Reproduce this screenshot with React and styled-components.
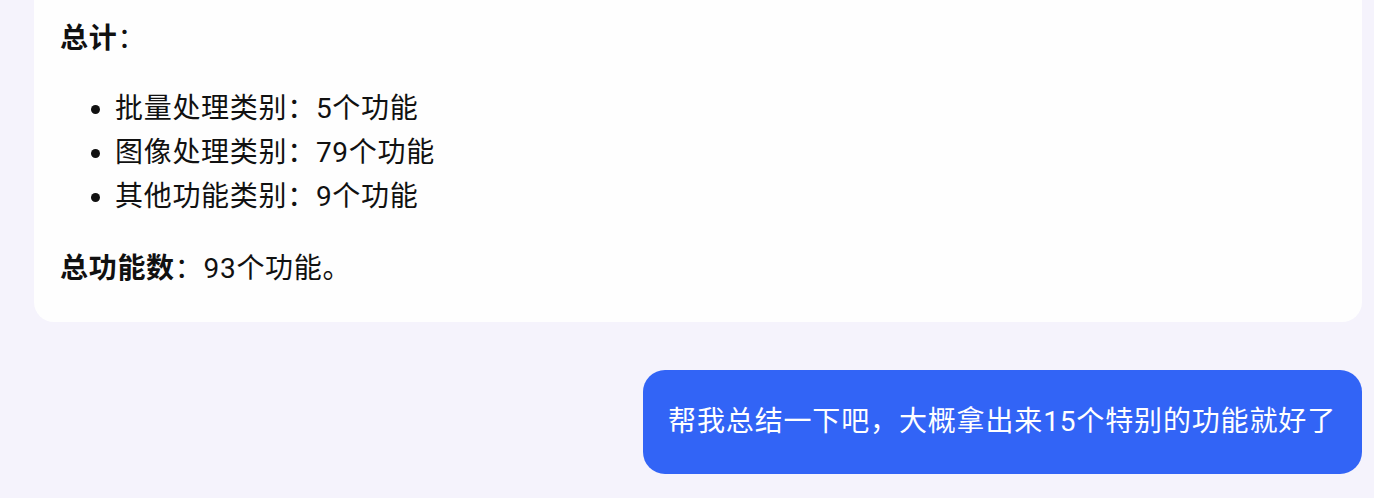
import React from 'react'
import styled, { createGlobalStyle } from 'styled-components'

const GlobalStyle = createGlobalStyle`
  html, body {
    margin: 0;
    padding: 0;
    background: #f5f3fc;
  }
  body {
    font-family: Roboto, "Noto Sans CJK SC", "Noto Sans", sans-serif;
    color: #111;
  }
`;

const Page = styled.div`
  padding: 0 12px 0 34px;
  display: flex;
  flex-direction: column;
  height: 498px;
  overflow: hidden;
`;

const Card = styled.div`
  margin-top: -24px;
  background: #fefefe;
  border-radius: 20px;
  padding: 41px 26px 31px 26px;
`;

const Para = styled.p`
  margin: 0;
  font-size: 28px;
  line-height: 44px;
  letter-spacing: 0.7px;
`;

const List = styled.ul`
  margin: 26px 0 28px 0;
  padding-left: 55px;
  font-size: 28px;
  line-height: 44px;
  letter-spacing: 0.7px;
`;

const Item = styled.li`
  padding-left: 0;
`;

const Bold = styled.b`
  font-weight: 700;
`;

const Row = styled.div`
  display: flex;
  justify-content: flex-end;
  margin-top: 48px;
`;

const Bubble = styled.div`
  background: #3264f6;
  color: #fff;
  border-radius: 22px;
  padding: 30px 26px 30px 25px;
  font-size: 28px;
  line-height: 44px;
  letter-spacing: 0.85px;
`;

export default function App() {
  return (
    <>
      <GlobalStyle />
      <Page>
        <Card>
          <Para><Bold>总计</Bold>：</Para>
          <List>
            <Item>批量处理类别：5个功能</Item>
            <Item>图像处理类别：79个功能</Item>
            <Item>其他功能类别：9个功能</Item>
          </List>
          <Para><Bold>总功能数</Bold>：93个功能。</Para>
        </Card>
        <Row>
          <Bubble>帮我总结一下吧，大概拿出来15个特别的功能就好了</Bubble>
        </Row>
      </Page>
    </>
  )
}
